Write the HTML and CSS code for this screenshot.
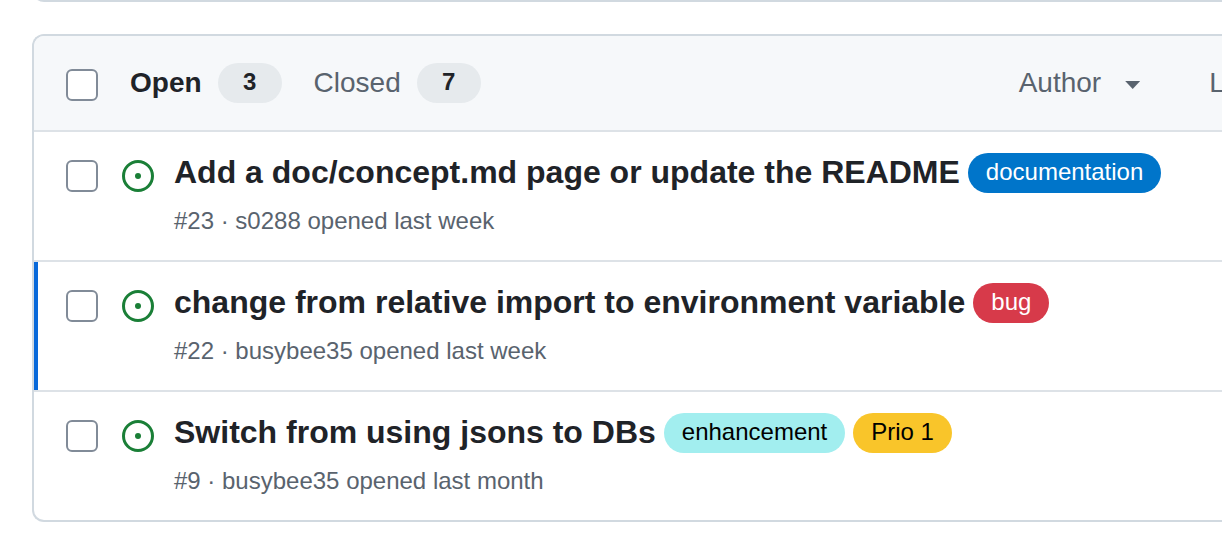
FILE: index.html
```
<!DOCTYPE html>
<html lang="en">
<head>
<meta charset="utf-8">
<title>Issues</title>
<link rel="stylesheet" href="styles.css">
</head>
<body>
<div class="previous-box"></div>
<main class="issues">
  <header class="toolbar">
    <span class="checkbox"></span>
    <nav class="states">
      <a class="state selected">Open <span class="counter">3</span></a>
      <a class="state">Closed <span class="counter">7</span></a>
    </nav>
    <div class="filters">
      <span class="filter">Author <span class="caret"></span></span>
      <span class="filter">L</span>
    </div>
  </header>
  <article class="issue">
    <span class="checkbox"></span>
    <svg class="icon" viewBox="0 0 16 16"><path d="M8 9.5a1.5 1.5 0 1 0 0-3 1.5 1.5 0 0 0 0 3Z"/><path d="M8 0a8 8 0 1 1 0 16A8 8 0 0 1 8 0ZM1.500 8a6.500 6.500 0 1 0 13 0 6.500 6.500 0 0 0-13 0Z"/></svg>
    <div class="content">
      <div class="heading"><h2 class="title">Add a doc/concept.md page or update the README</h2><span class="label documentation">documentation</span></div>
      <p class="meta">#23 · s0288 opened last week</p>
    </div>
  </article>
  <article class="issue focused">
    <span class="checkbox"></span>
    <svg class="icon" viewBox="0 0 16 16"><path d="M8 9.5a1.5 1.5 0 1 0 0-3 1.5 1.5 0 0 0 0 3Z"/><path d="M8 0a8 8 0 1 1 0 16A8 8 0 0 1 8 0ZM1.500 8a6.500 6.500 0 1 0 13 0 6.500 6.500 0 0 0-13 0Z"/></svg>
    <div class="content">
      <div class="heading"><h2 class="title">change from relative import to environment variable</h2><span class="label bug">bug</span></div>
      <p class="meta">#22 · busybee35 opened last week</p>
    </div>
  </article>
  <article class="issue">
    <span class="checkbox"></span>
    <svg class="icon" viewBox="0 0 16 16"><path d="M8 9.5a1.5 1.5 0 1 0 0-3 1.5 1.5 0 0 0 0 3Z"/><path d="M8 0a8 8 0 1 1 0 16A8 8 0 0 1 8 0ZM1.500 8a6.500 6.500 0 1 0 13 0 6.500 6.500 0 0 0-13 0Z"/></svg>
    <div class="content">
      <div class="heading"><h2 class="title">Switch from using jsons to DBs</h2><span class="label enhancement">enhancement</span><span class="label priority">Prio 1</span></div>
      <p class="meta">#9 · busybee35 opened last month</p>
    </div>
  </article>
</main>
</body>
</html>
```
FILE: styles.css
```
* { box-sizing: border-box; }
html { overflow: hidden; }
body {
  margin: 0;
  height: 551px;
  overflow: hidden;
  background: #fff;
  color: #1f2328;
  font-family: "Liberation Sans", Arial, sans-serif;
}
.previous-box {
  height: 24px;
  margin: -22px 0 32px 32px;
  border: 2px solid #d1d9e0;
  border-right: 0;
  border-radius: 12px 0 0 12px;
}
.issues {
  margin-left: 32px;
  border: 2px solid #d1d9e0;
  border-right: 0;
  border-radius: 12px 0 0 12px;
  overflow: hidden;
}
.toolbar {
  display: flex;
  height: 94px;
  padding-left: 32px;
  background: #f6f8fa;
  color: #59636e;
  font-size: 28px;
  line-height: 40px;
}
.checkbox {
  flex: none;
  width: 32px;
  height: 32px;
  border: 2px solid #818b98;
  border-radius: 6px;
  background: #fff;
}
.toolbar .checkbox { margin-top: 33px; }
.states {
  display: flex;
  flex: none;
  gap: 32px;
  width: 888.7px;
  margin: 27px 0 0 32px;
}
.state {
  display: flex;
  gap: 16px;
  height: 40px;
}
.selected {
  color: #1f2328;
  font-weight: 700;
}
.counter {
  width: 64px;
  height: 40px;
  border-radius: 20px;
  background: #e6eaed;
  color: #1f2328;
  font-size: 24px;
  font-weight: 700;
  line-height: 38px;
  text-align: center;
}
.filters {
  display: flex;
  flex: none;
  gap: 69px;
  padding-top: 27px;
}
.filter {
  display: flex;
  gap: 24px;
}
.caret {
  width: 15px;
  height: 8px;
  margin-top: 18px;
  background: currentColor;
  clip-path: polygon(0 0, 100% 0, 50% 100%);
}
.issue {
  display: flex;
  height: 130px;
  padding-left: 32px;
  border-top: 2px solid #dde2e7;
}
.focused { box-shadow: inset 4px 0 #0969da; }
.issue .checkbox { margin-top: 28px; }
.icon {
  flex: none;
  width: 32px;
  height: 32px;
  margin: 28px 20px 0 24px;
  fill: #1a7f37;
}
.heading {
  display: flex;
  gap: 8px;
  height: 40px;
  margin-top: 21px;
  white-space: nowrap;
}
.title {
  margin: 0;
  font-size: 32px;
  font-weight: 700;
  line-height: 38px;
}
.label {
  height: 40px;
  padding: 0 18px;
  border-radius: 20px;
  font-size: 24px;
  line-height: 38px;
}
.documentation { background: #0075ca; color: #fff; }
.bug { background: #d73a4a; color: #fff; }
.enhancement { background: #a2eeef; color: #000; }
.priority { background: #f9c52a; color: #000; }
.meta {
  margin: 10px 0 0;
  color: #59636e;
  font-size: 24px;
  line-height: 36px;
}
```
